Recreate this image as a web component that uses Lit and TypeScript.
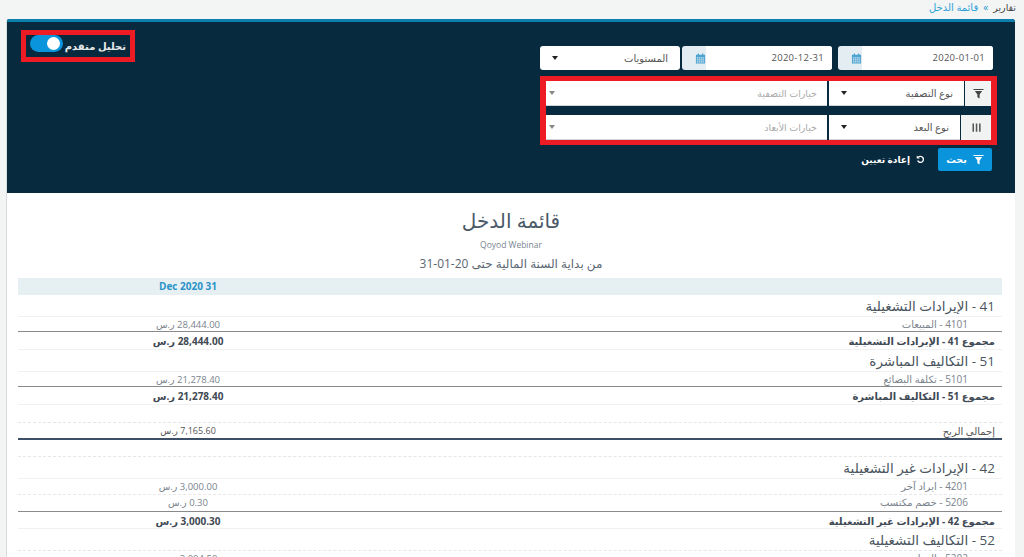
import { LitElement, html, css, svg } from "lit";
import { customElement } from "lit/decorators.js";

type Row = { k: string; name?: string; val?: string };

const rows: Row[] = [
  { k: "group", name: "41 - الإيرادات التشغيلية" },
  { k: "item", name: "4101 - المبيعات", val: "28,444.00 ر.س" },
  { k: "total", name: "مجموع 41 - الإيرادات التشغيلية", val: "28,444.00 ر.س" },
  { k: "group", name: "51 - التكاليف المباشرة" },
  { k: "item", name: "5101 - تكلفة البضائع", val: "21,278.40 ر.س" },
  { k: "total", name: "مجموع 51 - التكاليف المباشرة", val: "21,278.40 ر.س" },
  { k: "blank" },
  { k: "gross", name: "إجمالي الربح", val: "7,165.60 ر.س" },
  { k: "blank b2" },
  { k: "group", name: "42 - الإيرادات غير التشغيلية" },
  { k: "item dash", name: "4201 - ايراد آخر", val: "3,000.00 ر.س" },
  { k: "item last", name: "5206 - خصم مكتسب", val: "0.30 ر.س" },
  { k: "total t3", name: "مجموع 42 - الإيرادات غير التشغيلية", val: "3,000.30 ر.س" },
  { k: "group g4", name: "52 - التكاليف التشغيلية" },
  { k: "item", name: "5202 - الرواتب", val: "3,004.50 ر.س" },
];

const calendar = svg`<svg class="ic" viewBox="0 0 12 12" width="11" height="11"><path fill="#4aa3d0" d="M1 2h10v9.5H1zM3 .5h1.4v2.4H3zM7.6.5H9v2.4H7.6z"/><path fill="#cfe4ef" d="M2 4.5h1.7v1.5H2zM4.3 4.5H6v1.5H4.3zM6.6 4.5h1.7v1.5H6.6zM8.9 4.5H10v1.5H8.9zM2 6.7h1.7v1.5H2zM4.3 6.7H6v1.5H4.3zM6.6 6.7h1.7v1.5H6.6zM8.9 6.7H10v1.5H8.9zM2 8.9h1.7v1.5H2zM4.3 8.9H6v1.5H4.3zM6.6 8.9h1.7v1.5H6.6zM8.9 8.9H10v1.5H8.9z"/></svg>`;
const funnel = (c: string) => svg`<svg viewBox="0 0 12 12" width="11" height="11"><path fill=${c} d="M.5 1h11v1.3H.5zM2 3.4h8L7.2 7v4.4L4.8 10V7z"/></svg>`;
const columns = svg`<svg viewBox="0 0 12 12" width="11" height="11"><path fill="#555" d="M1.6 1.5h1.7v9H1.6zM5.2 1.5h1.7v9H5.2zM8.8 1.5h1.7v9H8.8z"/></svg>`;
const reset = svg`<svg viewBox="0 0 12 12" width="9" height="9"><path fill="none" stroke="#fff" stroke-width="1.8" d="M3 3.1A4 4 0 1 1 2.2 7.4"/><path fill="#fff" d="M1 .8v4h4z"/></svg>`;

@customElement("app-root")
export class AppRoot extends LitElement {
  static styles = css`
    :host {
      display: block;
      height: 557px;
      overflow: hidden;
      background: #f3f5f5;
      font-family: "Open Sans", "DejaVu Sans", sans-serif;
      direction: rtl;
    }
    .crumbs {
      height: 19px;
      padding-right: 8px;
      display: flex;
      gap: 5px;
      font-size: 9.5px;
      line-height: 15px;
      color: #444;
      align-items: flex-start;
    }
    .crumbs .sep { color: #2a93c9; font-size: 10px; }
    .crumbs .cur { color: #2a9fd6; font-size: 10px; }
    .panel {
      margin: 0 9px 0 6px;
      height: 538px;
      display: flex;
      flex-direction: column;
      background: #fff;
      border-radius: 3px 3px 0 0;
      border-left: 1px solid #d8dcdc;
      overflow: hidden;
    }
    .dark {
      height: 174px;
      flex: none;
      background: #082a3e;
      border-top: 3px solid #0d7fac;
      display: flex;
      justify-content: space-between;
      align-items: flex-start;
      padding: 24px 22px 0 14px;
      box-sizing: border-box;
    }
    .form { width: 453px; display: flex; flex-direction: column; }
    .dates { display: flex; height: 25px; }
    .date {
      display: flex;
      background: #e3edf2;
      border-radius: 3px;
      align-items: center;
      height: 24px;
      flex: none;
    }
    .date .in {
      flex: 1;
      height: 24px;
      background: #fff;
      border-radius: 0 3px 3px 0;
      font-size: 9.5px;
      line-height: 24px;
      color: #555;
      padding-right: 8px;
      box-sizing: border-box;
      letter-spacing: 0.3px;
    }
    .date .add { width: 24px; display: flex; justify-content: flex-start; align-items: center; }
    .d1 { width: 155px; margin-left: 6px; }
    .d2 { width: 150px; margin-left: 2px; }
    .sel {
      display: flex;
      align-items: center;
      justify-content: space-between;
      background: #fff;
      box-sizing: border-box;
      font-size: 10px;
      color: #555;
      padding: 0 12px;
      height: 25px;
      white-space: nowrap;
    }
    .fr .sel { border-bottom: 1px solid #cfd3d5; }
    .sel.lv { width: 140px; height: 24px; border-radius: 3px; flex: none; }
    .caret {
      width: 0; height: 0;
      border-left: 3.5px solid transparent;
      border-right: 3.5px solid transparent;
      border-top: 4px solid #222;
    }
    .sel .ph { color: #aaa; font-size: 9.5px; }
    .caret.mute { border-top-color: #888; }
    .flag {
      border-style: solid;
      border-color: #ed1c24;
      border-width: 5px 6px;
      margin: 5px -4px 3px 0;
      display: flex;
      flex-direction: column;
      gap: 9px;
      width: 457px;
      box-sizing: border-box;
    }
    .fr { display: flex; gap: 2px; height: 25px; }
    .fr .add {
      background: #f1f3f3;
      display: flex;
      align-items: center;
      justify-content: center;
      flex: none;
      margin-left: -1px;
    }
    .add.a1 { width: 26px; }
    .add.a2 { width: 30px; }
    .s1 { width: 135px; flex: none; padding-right: 11px; }
    .s2 { width: 131px; flex: none; padding-right: 11px; }
    .opts { flex: 1; padding: 0 10px 0 3px; }
    .acts { display: flex; align-items: center; gap: 13px; margin-right: 1px; }
    .btn {
      width: 54px;
      height: 23px;
      background: #0a94dc;
      border-radius: 2px;
      color: #fff;
      display: flex;
      align-items: center;
      justify-content: center;
      gap: 6px;
      font-size: 9.5px;
      font-weight: 700;
    }
    .rst {
      display: flex;
      align-items: center;
      gap: 6px;
      color: #fff;
      font-size: 9px;
      font-weight: 700;
    }
    .adv {
      border: 5px solid #ed1c24;
      width: 114px;
      height: 32px;
      box-sizing: border-box;
      display: flex;
      align-items: center;
      gap: 2px;
      padding: 0 4px 0 3px;
      color: #e6e9ea;
      font-size: 10px;
      font-weight: 700;
      white-space: nowrap;
      margin-top: -16px;
    }
    .track {
      width: 33px;
      height: 17px;
      border-radius: 9px;
      background: #0a94dc;
      display: flex;
      align-items: center;
      justify-content: flex-start;
      flex: none;
      padding: 0 3px;
      box-sizing: border-box;
      margin-top: -6px;
    }
    .knob { width: 13px; height: 13px; border-radius: 50%; background: #fff; }
    .head { flex: none; text-align: center; height: 85px; padding-top: 14px; box-sizing: border-box; }
    .head h1 { margin: 0; font-size: 20px; font-weight: 400; line-height: 28px; color: #4a5a68; }
    .head .co { font-size: 8.5px; color: #7a8590; line-height: 14px; margin-top: 3px; }
    .head .per { font-size: 12px; line-height: 18px; margin-top: 3px; color: #5a6672; }
    .table { flex: none; margin: 0 13px 0 11px; }
    .r {
      display: flex;
      justify-content: space-between;
      box-sizing: border-box;
      border-bottom: 1px solid #f0f2f2;
    }
    .r .n { padding-right: 7px; white-space: nowrap; }
    .r .v { width: 340px; text-align: center; flex: none; }
    .th {
      height: 17px;
      background: #e6eff2;
      color: #2a93c9;
      font-size: 10px;
      font-weight: 700;
      line-height: 17px;
      direction: ltr;
      border: 0;
      justify-content: flex-start;
    }
    .group { height: 22px; font-size: 13.5px; line-height: 22px; color: #4a5560; }
    .group.g4 { border-bottom: 1px dashed #e6e6e6; }
    .item { height: 15px; font-size: 10px; line-height: 15px; color: #7a838c; border-bottom: 1px solid #8a8a8a; }
    .item .n { padding-right: 34px; }
    .item .v { font-size: 9.5px; }
    .item.dash { border-bottom: 1px dashed #e8e8e8; height: 16px; }
    .item.last { height: 17px; }
    .total { height: 18px; font-size: 10px; font-weight: 700; line-height: 18px; color: #3f4a54; }
    .total.t3 { height: 17px; }
    .blank { height: 18px; border-bottom: 1px dashed #e6e6e6; }
    .blank.b2 { height: 17px; }
    .gross { height: 17px; font-size: 10px; line-height: 16px; color: #555; border-bottom: 2px solid #3c4f66; }
    .gross .v { font-size: 9px; }
  `;

  render() {
    return html`
      <div class="crumbs"><span>تقارير</span><span class="sep">»</span><span class="cur">قائمة الدخل</span></div>
      <div class="panel">
        <div class="dark">
          <div class="form">
            <div class="dates">
              <div class="date d1"><div class="in"><bdi>2020-01-01</bdi></div><div class="add">${calendar}</div></div>
              <div class="date d2"><div class="in"><bdi>2020-12-31</bdi></div><div class="add">${calendar}</div></div>
              <div class="sel lv"><span>المستويات</span><i class="caret"></i></div>
            </div>
            <div class="flag">
              <div class="fr">
                <div class="add a1">${funnel("#444")}</div>
                <div class="sel s1"><span>نوع التصفية</span><i class="caret"></i></div>
                <div class="sel opts"><span class="ph">خيارات التصفية</span><i class="caret mute"></i></div>
              </div>
              <div class="fr">
                <div class="add a2">${columns}</div>
                <div class="sel s2"><span>نوع البعد</span><i class="caret"></i></div>
                <div class="sel opts"><span class="ph">خيارات الأبعاد</span><i class="caret mute"></i></div>
              </div>
            </div>
            <div class="acts">
              <div class="btn">${funnel("#fff")}<span>بحث</span></div>
              <div class="rst">${reset}<span>إعادة تعيين</span></div>
            </div>
          </div>
          <div class="adv"><span>تحليل متقدم</span><div class="track"><div class="knob"></div></div></div>
        </div>
        <div class="head">
          <h1>قائمة الدخل</h1>
          <div class="co">Qoyod Webinar</div>
          <div class="per">من بداية السنة المالية حتى <bdi>31-01-20</bdi></div>
        </div>
        <div class="table">
          <div class="r th"><div class="v">Dec 2020 31</div></div>
          ${rows.map(
            (r) => html`<div class="r ${r.k}">
              <div class="n">${r.name ?? ""}</div>
              <div class="v">${r.val ?? ""}</div>
            </div>`
          )}
        </div>
      </div>
    `;
  }
}
